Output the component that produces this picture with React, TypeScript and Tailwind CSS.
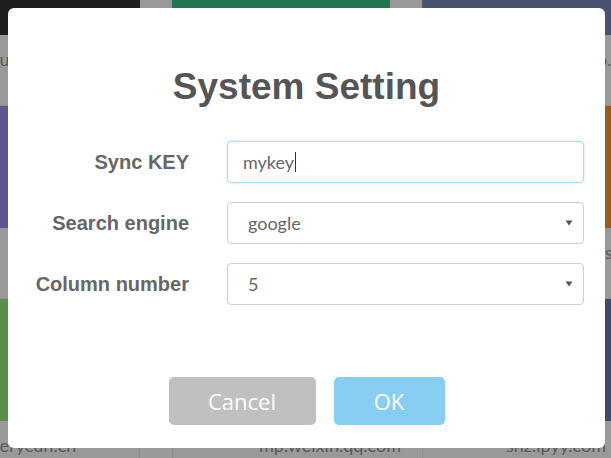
import React from 'react';

type Tile = { color: string; label: string; pad: string };

const columns: Tile[][] = [
  [
    { color: 'bg-[#343434]', label: 'www.github.com', pad: 'pl-[0px]' },
    { color: 'bg-[#988ef0]', label: 'v2ex.com', pad: 'pl-[100px]' },
    { color: 'bg-[#96ee7d]', label: 'www.everycun.cn', pad: 'pl-[12px]' },
  ],
  [
    { color: 'bg-[#37c680]', label: 'www.zhihu.com', pad: 'pl-[86px]' },
    { color: 'bg-[#6fa8e8]', label: 'weibo.com', pad: 'pl-[86px]' },
    { color: 'bg-[#e0a050]', label: 'mp.weixin.qq.com', pad: 'pl-[86px]' },
  ],
  [
    { color: 'bg-[#7b89bb]', label: 'www.taobao.com', pad: 'pl-[83px]' },
    { color: 'bg-[#ff9635]', label: 'www.cnblogs.com', pad: 'pl-[83px]' },
    { color: 'bg-[#697bb0]', label: 'shz.ipyy.com', pad: 'pl-[83px]' },
  ],
];

function Caret() {
  return (
    <svg width="8" height="6" viewBox="0 0 8 6" className="text-[#555]">
      <path d="M0.5 0.5 L7.5 0.5 L4 5.5 Z" fill="currentColor" />
    </svg>
  );
}

function SelectBox({ value }: { value: string }) {
  return (
    <div className="flex h-[42px] w-[357px] items-center justify-between rounded-[4px] border border-[#cfcfcf] bg-white pl-[20px] pr-[10px] text-[18px] text-[#666]">
      <span>{value}</span>
      <Caret />
    </div>
  );
}

export default function App() {
  return (
    <div className="relative h-[458px] w-full overflow-hidden bg-white font-['Lato','Liberation_Sans',sans-serif]">
      {/* page behind the dialog */}
      <div className="-ml-[78px] -mt-[87px] flex gap-[32px]">
        {columns.map((col, i) => (
          <div key={i} className="flex w-[218px] shrink-0 flex-col">
            {col.map((tile) => (
              <div key={tile.label} className="flex flex-col">
                <div className={`h-[122px] ${tile.color}`} />
                <div
                  className={`h-[71px] whitespace-nowrap border-x border-b border-[#eeeeee] pt-[12px] text-[18px] leading-[24px] text-[#999] ${tile.pad}`}
                >
                  {tile.label}
                </div>
              </div>
            ))}
          </div>
        ))}
      </div>

      {/* overlay + dialog */}
      <div className="absolute inset-0 bg-black/40 pl-[8px] pt-[8px]">
        <div className="flex h-[440px] w-[597px] flex-col items-center rounded-[6px] bg-white">
          <h1 className="pt-[59px] text-[37px] font-bold leading-[40px] text-[#555] font-['Liberation_Sans',Arial,sans-serif]">
            System Setting
          </h1>

          <div className="mt-[34px] flex w-full flex-col gap-[19px] font-['Liberation_Sans',Arial,sans-serif]">
            <div className="flex items-center">
              <label className="w-[181px] text-right text-[20px] font-bold text-[#666]">Sync KEY</label>
              <div className="ml-[38px] flex h-[42px] w-[357px] items-center rounded-[4px] border border-[#a9dcf2] bg-white pl-[15px] text-[18px] text-[#666] shadow-[0_0_3px_rgba(102,175,233,0.35)] font-['Lato',sans-serif]">
                mykey
                <span className="ml-px h-[20px] w-px bg-[#333]" />
              </div>
            </div>
            <div className="flex items-center">
              <label className="w-[181px] text-right text-[20px] font-bold text-[#666]">Search engine</label>
              <div className="ml-[38px] font-['Lato',sans-serif]">
                <SelectBox value="google" />
              </div>
            </div>
            <div className="flex items-center">
              <label className="w-[181px] text-right text-[20px] font-bold text-[#666]">Column number</label>
              <div className="ml-[38px] font-['Lato',sans-serif]">
                <SelectBox value="5" />
              </div>
            </div>
          </div>

          <div className="mt-[72px] flex gap-[18px] font-['Open_Sans',sans-serif] text-[22px] text-white">
            <button className="h-[48px] w-[147px] rounded-[5px] bg-[#c0c0c0]">Cancel</button>
            <button className="h-[48px] w-[111px] rounded-[5px] bg-[#87cef2]">OK</button>
          </div>
        </div>
      </div>
    </div>
  );
}
